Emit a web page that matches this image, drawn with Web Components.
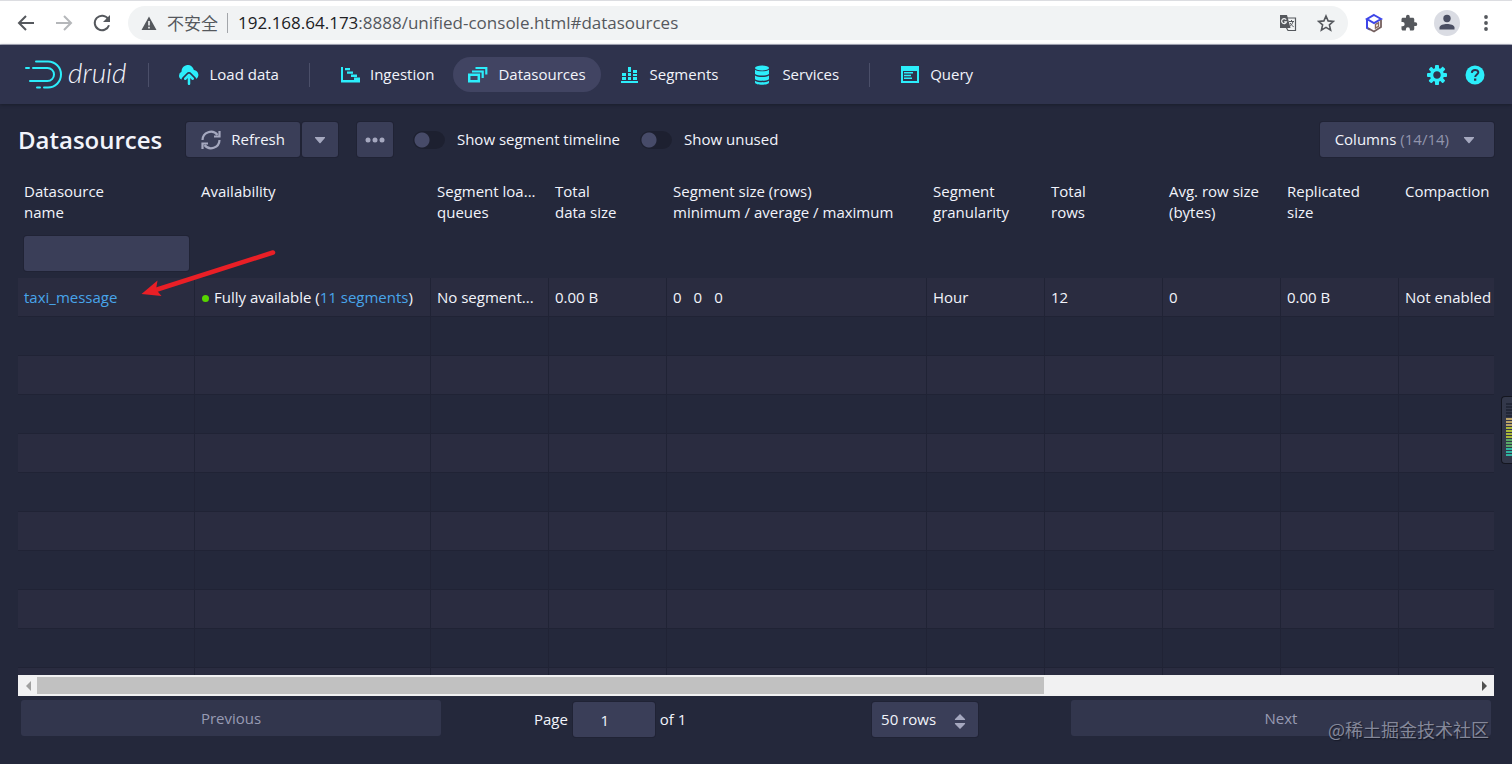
<!DOCTYPE html>
<html lang="en">
<head>
<meta charset="utf-8">
<title>Apache Druid</title>
<style>
    body {
        margin: 0;
        background: #24283b;
        color: #f2f4fb;
        font: 15px/21px "Open Sans", "Noto Sans CJK SC", sans-serif;
        --accent: #2ceefb;
        --control: #3a3e58;
        --muted: #a5a8bf;
        --line: #202335;
    }
</style>
</head>
<body>
<console-page></console-page>

<script>
const ICONS = {
    back: ['0 0 20 20', '<path d="M18 10H3M10 3l-7 7 7 7" fill="none" stroke="currentColor" stroke-width="2"/>'],
    forward: ['0 0 20 20', '<path d="M2 10h15M10 3l7 7-7 7" fill="none" stroke="currentColor" stroke-width="2"/>'],
    reload: ['0 0 20 20', '<path d="M16.2 6A7.3 7.3 0 1 0 17 12.200" fill="none" stroke="currentColor" stroke-width="2"/><path d="M18 2v7h-7z" fill="currentColor"/>'],
    warning: ['0 0 16 16', '<path fill="currentColor" fill-rule="evenodd" d="M8 1.500 15.500 15H.500zM7.200 6v4.500h1.600V6zM7.200 11.700v1.700h1.600v-1.700z"/>'],
    translate: ['0 0 18 18', '<path d="M8 4h8.500v12.500H9L7 13" fill="none" stroke="currentColor" stroke-width="1.200"/><path fill="currentColor" d="M1 1h7l3.500 13H1z"/><path d="M7.200 5.600a2.500 2.500 0 1 0 .3 2.300H5.200" fill="none" stroke="#f1f3f4" stroke-width="1.200"/><path d="M10 7.500h5M12.500 6v1.500M14 7.500c-.5 2.500-2 4-3.500 5M11.300 9c.8 1.800 2 3 3.400 3.700" fill="none" stroke="currentColor"/>'],
    star: ['0 0 18 18', '<path d="m9 2 2.100 4.900 5.300.5-4 3.500 1.200 5.200L9 13.400l-4.600 2.700 1.200-5.200-4-3.500 5.300-.5z" fill="none" stroke="currentColor" stroke-width="1.600"/>'],
    cube: ['0 0 18 20', '<path d="M9 2 16 6 9 10 2 6zM2 6v9l3 1.500" fill="none" stroke="#3d45e8" stroke-width="2"/><path d="M3 15.200 9 18.500 16 14V7" fill="none" stroke="#75605f" stroke-width="1.800"/><path d="M10.500 11.500v3.500l3-1.700V9.800z" fill="none" stroke="#8a6a60" stroke-width="1.400"/>'],
    puzzle: ['0 0 24 24', '<path fill="currentColor" d="M20.500 11H19V7c0-1.100-.9-2-2-2h-4V3.500a2.500 2.500 0 0 0-5 0V5H4c-1.100 0-2 .9-2 2v3.800h1.500a2.700 2.700 0 0 1 0 5.400H2V20c0 1.100.9 2 2 2h3.800v-1.500a2.700 2.700 0 0 1 5.400 0V22H17c1.100 0 2-.9 2-2v-4h1.500a2.500 2.500 0 0 0 0-5z"/>'],
    person: ['0 0 26 26', '<circle cx="13" cy="13" r="13" fill="#dadce3"/><circle cx="13" cy="8.500" r="3.700" fill="#4a4e62"/><path fill="#4a4e62" d="M5.500 19.500v-2c0-2.500 4.500-3.500 7.500-3.500s7.500 1 7.500 3.500v2z"/>'],
    kebab: ['0 0 20 20', '<g fill="currentColor"><circle cx="10" cy="4" r="1.900"/><circle cx="10" cy="10" r="1.900"/><circle cx="10" cy="16" r="1.900"/></g>'],
    upload: ['0 0 16 16', '<path fill="currentColor" d="M8.710 7.290C8.530 7.110 8.280 7 8 7s-.53.110-.71.290l-3 3a1.003 1.003 0 0 0 1.420 1.420L7 10.410V15c0 .550.450 1 1 1s1-.450 1-1v-4.590l1.290 1.290c.180.190.430.300.710.300a1.003 1.003 0 0 0 .710-1.710zM12 4h-.1A5 5 0 0 0 2 5l.02.330A3.500 3.500 0 0 0 0 8.500c0 1.400.84 2.600 2.030 3.170.02-.7.300-1.390.83-1.920l3-3a3 3 0 0 1 4.280 0l3 3c.4.400.66.880.78 1.400A4 4 0 0 0 12 4z"/>'],
    gantt: ['0 0 20 20', '<path fill="currentColor" d="M1 2h2v13h17v2.500H1zM5 3h5v2.300H5zM7 6.500h6v2.300H7zM11 9.500h6V12h-6zM14 12.500h6V15h-6z"/>'],
    multi: ['0 0 20 20', '<g fill="none" stroke="currentColor" stroke-width="2.200"><path d="M1.200 9.700h9.600v6.600H1.200z" stroke-width="2.500"/><path d="M4 6.500h10.700V13M7.500 3h10.800v6.500"/></g>'],
    bars: ['0 0 20 20', '<path fill="currentColor" d="M1 16h17v2H1zM2 12h4v3H2zM2 8h4v3H2zM8 12h3v3H8zM8 8h3v3H8zM8 2h3v5H8zM13 12h4v3h-4zM13 9h4v2h-4zM13 5h4v3h-4z"/>'],
    database: ['0 0 20 20', '<g fill="currentColor"><ellipse cx="10" cy="3" rx="7" ry="2.600"/><path d="M3 4.800c3 2 11 2 14 0V9c-3 2-11 2-14 0zM3 10.500c3 2 11 2 14 0v3.700c-3 2-11 2-14 0zM3 15.700c3 2 11 2 14 0v1.800c0 3-14 3-14 0z"/></g>'],
    application: ['0 0 20 20', '<path fill="currentColor" fill-rule="evenodd" d="M1 1h18v17H1zM3 6v10h14V6zM4 7h9v1.500H4zM4 9.800h7v1.500H4zM4 12.500h8V14H4z"/>'],
    cog: ['0 0 16 16', '<path fill="currentColor" d="M15.190 6.390h-1.850c-.11-.37-.27-.71-.45-1.040l1.360-1.360c.31-.31.31-.82 0-1.130l-1.130-1.130c-.31-.31-.82-.31-1.130 0l-1.360 1.360c-.33-.17-.67-.33-1.040-.44V.790c0-.44-.36-.8-.8-.8h-1.600c-.44 0-.8.360-.8.800v1.860c-.39.120-.75.280-1.100.470l-1.300-1.300c-.3-.3-.79-.3-1.090 0L1.820 2.910c-.3.300-.3.790 0 1.090l1.300 1.300c-.2.340-.36.700-.48 1.090H.790c-.44 0-.8.360-.8.800v1.600c0 .440.360.800.800.800h1.850c.110.370.270.710.450 1.040l-1.360 1.360c-.31.310-.31.820 0 1.130l1.130 1.130c.310.310.820.310 1.130 0l1.360-1.360c.330.180.670.330 1.040.440v1.860c0 .440.360.800.800.800h1.600c.440 0 .8-.36.8-.8v-1.860c.390-.12.750-.28 1.100-.47l1.300 1.300c.3.300.790.300 1.090 0l1.090-1.090c.3-.3.300-.79 0-1.090l-1.300-1.300c.190-.35.360-.71.480-1.100h1.850c.440 0 .8-.36.8-.8v-1.600a.816.816 0 0 0-.81-.79zm-7.200 4.600c-1.660 0-3-1.340-3-3s1.340-3 3-3 3 1.340 3 3-1.340 3-3 3z"/>'],
    help: ['0 0 20 20', '<circle cx="10" cy="10" r="9.500" fill="currentColor"/><path d="M6.800 7.800C7 5.800 8.300 5 10.100 5c3.400 0 4 2.600 2.300 4.100C11 10.300 10.300 10.500 10.200 12" fill="none" stroke="#2f334d" stroke-width="2"/><path d="M9 13.500h2.300v2.200H9z" fill="#2f334d"/>'],
    refresh: ['0 0 20 20', '<g fill="none" stroke="currentColor" stroke-width="2.200"><path d="M1.500 10A8.400 8.400 0 0 1 16.500 5M18.500 10A8.400 8.400 0 0 1 3.500 15"/><path d="M18.500 1v5.500H13M1.500 19v-5.500H7"/></g>'],
    caret: ['0 0 20 20', '<path fill="currentColor" d="M5.500 7h9c.6 0 .7.500.4.900l-4.300 5c-.3.400-.9.400-1.200 0l-4.300-5c-.3-.4-.2-.9.400-.9z"/>'],
    more: ['0 0 20 20', '<g fill="currentColor"><circle cx="3" cy="10" r="2.500"/><circle cx="10" cy="10" r="2.500"/><circle cx="17" cy="10" r="2.500"/></g>'],
    updown: ['0 0 20 20', '<path fill="currentColor" d="m10 3 5 5c.3.500.1 1-.5 1h-9c-.6 0-.8-.5-.5-1zM10 18l-5-5c-.3-.5-.1-1 .5-1h9c.6 0 .8.500.5 1z"/>'],
    left: ['0 0 10 10', '<path fill="currentColor" d="M8 0v10L3 5z"/>'],
    right: ['0 0 10 10', '<path fill="currentColor" d="M2 0v10l5-5z"/>']
};

/**
 * Base of all elements on the page: renders the static template of the class
 * into an open shadow root.
 */
class ConsoleElement extends HTMLElement {
    connectedCallback() {
        if (this.shadowRoot) return;
        const tmp = document.createElement('template');
        tmp.innerHTML = this.constructor.template;
        this.attachShadow({mode: 'open'}).append(tmp.content.cloneNode(true));
        this.init();
    }

    init() {}
}

// <console-icon name="cog" size="20">
class ConsoleIcon extends ConsoleElement {
    static template = `
        <style>
            :host { display: inline-flex; flex: none; }
            svg { display: block; }
        </style>`;

    init() {
        const [viewBox, shapes] = ICONS[this.getAttribute('name')];
        const size = this.getAttribute('size') || 20;
        this.shadowRoot.innerHTML += `<svg width="${size}" height="${size}" viewBox="${viewBox}" aria-hidden="true">${shapes}</svg>`;
    }
}

class BrowserBar extends ConsoleElement {
    static template = `
        <style>
            :host {
                display: flex;
                align-items: center;
                box-sizing: border-box;
                height: 45px;
                padding: 0 16px;
                background: #fff;
                border-top: 1px solid #dcdde1;
                border-bottom: 1px solid #b9bbc9;
                color: #55585d;
            }
            button {
                display: flex;
                padding: 0;
                border: 0;
                background: none;
                color: inherit;
            }
            nav { display: flex; gap: 18px; margin-right: 16px; }
            button:disabled { color: #b5b7ba; }
            .address {
                display: flex;
                align-items: center;
                flex: 1;
                height: 34px;
                padding: 0 13px;
                border-radius: 17px;
                background: #f1f3f4;
                font-size: 17px;
            }
            .insecure {
                margin: 0 10px;
                padding-right: 9px;
                border-right: 1px solid #a3a6aa;
                font: 17px/20px "Noto Sans CJK SC", sans-serif;
            }
            .url { flex: 1; white-space: nowrap; }
            b { font-weight: 400; color: #202124; }
            .address button { margin-left: 20px; }
            .tools { display: flex; align-items: center; gap: 16px; margin-left: 16px; }
        </style>
        <nav>
            <button aria-label="Back"><console-icon name="back"></console-icon></button>
            <button aria-label="Forward" disabled><console-icon name="forward"></console-icon></button>
            <button aria-label="Reload"><console-icon name="reload"></console-icon></button>
        </nav>
        <div class="address">
            <console-icon name="warning" size="16"></console-icon>
            <span class="insecure" lang="zh">不安全</span>
            <span class="url"><b>192.168.64.173</b>:8888/unified-console.html#datasources</span>
            <button aria-label="Translate"><console-icon name="translate" size="18"></console-icon></button>
            <button aria-label="Bookmark"><console-icon name="star" size="18"></console-icon></button>
        </div>
        <div class="tools">
            <button aria-label="Extension"><console-icon name="cube"></console-icon></button>
            <button aria-label="Extensions"><console-icon name="puzzle" size="18"></console-icon></button>
            <button aria-label="Profile"><console-icon name="person" size="26"></console-icon></button>
            <button aria-label="Menu"><console-icon name="kebab"></console-icon></button>
        </div>`;
}

class DruidLogo extends ConsoleElement {
    static template = `
        <style>
            :host { display: flex; align-items: center; }
            a {
                display: flex;
                align-items: center;
                gap: 5px;
                color: inherit;
                text-decoration: none;
                font: italic 300 28px/30px Lato, sans-serif;
            }
            svg { display: block; }
            span { padding-bottom: 6px; }
        </style>
        <a href="#">
            <svg width="39" height="30" viewBox="0 0 39 30" fill="none" stroke="#2ceefb" stroke-width="2" stroke-linecap="round" aria-hidden="true">
                <path d="M12 1.500h12a13 13 0 0 1 0 26H20M13 27.500h3"/>
                <path d="M9 8h14.500a6.500 6.500 0 0 1 0 13H6M2 8h3"/>
            </svg>
            <span>druid</span>
        </a>`;
}

// <nav-item icon="cog" active>Label</nav-item>
class NavItem extends ConsoleElement {
    static template = `
        <style>
            :host { display: block; }
            a {
                display: flex;
                align-items: center;
                gap: 10px;
                height: 35px;
                padding: 0 15px;
                border-radius: 18px;
                color: inherit;
                text-decoration: none;
                white-space: nowrap;
            }
            :host([active]) a { background: #414462; }
            console-icon { color: var(--accent); }
        </style>
        <a href="#"><slot></slot></a>`;

    init() {
        const icon = document.createElement('console-icon');
        icon.setAttribute('name', this.getAttribute('icon'));
        this.shadowRoot.querySelector('a').prepend(icon);
    }
}

class HeaderBar extends ConsoleElement {
    static template = `
        <style>
            :host {
                display: flex;
                align-items: center;
                gap: 4px;
                height: 59px;
                padding: 0 27px 0 24px;
                background: #2f334d;
                box-shadow: 0 1px 3px #1a1d2c;
                z-index: 1;
            }
            hr {
                width: 1px;
                height: 24px;
                margin: 0 11px;
                border: 0;
                background: #4b4f69;
            }
            druid-logo { margin-right: 7px; }
            .tools { display: flex; gap: 18px; margin-left: auto; }
            .tools button {
                display: flex;
                padding: 0;
                border: 0;
                background: none;
                color: var(--accent);
            }
        </style>
        <druid-logo></druid-logo>
        <hr>
        <nav-item icon="upload">Load data</nav-item>
        <hr>
        <nav-item icon="gantt">Ingestion</nav-item>
        <nav-item icon="multi" active>Datasources</nav-item>
        <nav-item icon="bars">Segments</nav-item>
        <nav-item icon="database">Services</nav-item>
        <hr>
        <nav-item icon="application">Query</nav-item>
        <div class="tools">
            <button aria-label="Settings"><console-icon name="cog"></console-icon></button>
            <button aria-label="Help"><console-icon name="help"></console-icon></button>
        </div>`;
}

class ToolButton extends ConsoleElement {
    static template = `
        <style>
            :host { display: block; }
            button {
                display: flex;
                align-items: center;
                justify-content: center;
                gap: 10px;
                width: 100%;
                height: 35px;
                padding: 0 var(--pad, 15px);
                border: 0;
                border-radius: 3px;
                background: var(--control);
                box-shadow: 0 0 0 1px #202335;
                color: inherit;
                font: inherit;
                white-space: nowrap;
            }
            button:disabled { background: #32364d; box-shadow: none; color: #989bb3; height: 36px; }
            ::slotted(console-icon) { color: var(--muted); }
        </style>
        <button><slot></slot></button>`;

    init() {
        const button = this.shadowRoot.querySelector('button');
        button.disabled = this.hasAttribute('disabled');
        if (this.hasAttribute('label')) button.setAttribute('aria-label', this.getAttribute('label'));
    }
}

class ToggleSwitch extends ConsoleElement {
    static template = `
        <style>
            :host { display: block; }
            label { display: flex; align-items: center; gap: 12px; white-space: nowrap; }
            input {
                appearance: none;
                width: 32px;
                height: 18px;
                margin: 0;
                border-radius: 9px;
                background: radial-gradient(circle at 9px 9px, #474b69 7px, #1d2030 8px);
            }
            input:checked { background: radial-gradient(circle at 23px 9px, #fff 7px, #1aa6b3 8px); }
        </style>
        <label><input type="checkbox"><slot></slot></label>`;
}

class ControlBar extends ConsoleElement {
    static template = `
        <style>
            :host { display: flex; align-items: center; gap: 20px; height: 35px; }
            h1 { margin: 0 4px 0 0; font-size: 24px; line-height: 35px; font-weight: 600; }
            .group { display: flex; gap: 2px; margin-right: -1px; }
            .icon { --pad: 8px; }
            .columns { margin-left: auto; }
            .count { margin-left: -6px; color: #9295ad; }
        </style>
        <h1>Datasources</h1>
        <div class="group">
            <tool-button><console-icon name="refresh"></console-icon><span>Refresh</span></tool-button>
            <tool-button class="icon" label="More refresh options"><console-icon name="caret"></console-icon></tool-button>
        </div>
        <tool-button class="icon" label="More actions"><console-icon name="more"></console-icon></tool-button>
        <toggle-switch>Show segment timeline</toggle-switch>
        <toggle-switch>Show unused</toggle-switch>
        <tool-button class="columns"><span>Columns</span><span class="count">(14/14)</span><console-icon name="caret"></console-icon></tool-button>`;
}

const COLUMNS = [
    {width: 177, head: ['Datasource', 'name'], cell: '<a href="#">taxi_message</a>', filter: true},
    {width: 236, head: ['Availability'], cell: '<i></i>Fully available (<a href="#">11 segments</a>)'},
    {width: 118, head: ['Segment loa...', 'queues'], cell: 'No segment...'},
    {width: 118, head: ['Total', 'data size'], cell: '0.00 B'},
    {width: 260, head: ['Segment size (rows)', 'minimum / average / maximum'], cell: '<span>0</span><span>0</span><span>0</span>'},
    {width: 118, head: ['Segment', 'granularity'], cell: 'Hour'},
    {width: 118, head: ['Total', 'rows'], cell: '12'},
    {width: 118, head: ['Avg. row size', '(bytes)'], cell: '0'},
    {width: 118, head: ['Replicated', 'size'], cell: '0.00 B'},
    {width: 118, head: ['Compaction'], cell: 'Not enabled'}
];

const PAD_ROWS = 10;

class DatasourceTable extends ConsoleElement {
    static template = `
        <style>
            :host { display: block; overflow: hidden; }
            table {
                width: 100%;
                min-width: 1499px;
                table-layout: fixed;
                border-collapse: separate;
                border-spacing: 0;
            }
            th, td {
                box-sizing: border-box;
                padding: 0 6px;
                overflow: hidden;
                text-overflow: ellipsis;
                text-align: left;
                font-weight: 400;
                white-space: nowrap;
            }
            .head th { height: 56px; padding-top: 5px; vertical-align: top; }
            .filters th { height: 46px; padding-top: 4px; vertical-align: top; }
            td { height: 39px; border-right: 1px solid var(--line); border-bottom: 1px solid var(--line); }
            tr:nth-child(odd) td { background: #2a2c40; }
            input {
                box-sizing: border-box;
                display: block;
                width: 100%;
                height: 35px;
                padding: 0 10px;
                border: 0;
                border-radius: 3px;
                background: var(--control);
                box-shadow: 0 0 0 1px #202335;
                color: inherit;
                font: inherit;
            }
            a { color: #48a5ea; text-decoration: none; }
            i {
                display: inline-block;
                width: 7px;
                height: 7px;
                margin: 0 5px 1px 1px;
                border-radius: 50%;
                background: #57d500;
            }
            span { margin-right: 12px; }
        </style>
        <table>
            <colgroup></colgroup>
            <thead><tr class="head"></tr><tr class="filters"></tr></thead>
            <tbody></tbody>
        </table>`;

    init() {
        const find = (selector) => this.shadowRoot.querySelector(selector);
        find('colgroup').innerHTML = COLUMNS.map(c => `<col style="width: ${c.width}px">`).join('');
        find('.head').innerHTML = COLUMNS.map(c => `<th scope="col">${c.head.map(line => `<div>${line}</div>`).join('')}</th>`).join('');
        find('.filters').innerHTML = COLUMNS.map(c => `<th>${c.filter ? '<input type="text" aria-label="Filter datasource name">' : ''}</th>`).join('');
        const row = `<tr>${COLUMNS.map(c => `<td>${c.cell}</td>`).join('')}</tr>`;
        const padRow = `<tr>${'<td></td>'.repeat(COLUMNS.length)}</tr>`;
        find('tbody').innerHTML = row + padRow.repeat(PAD_ROWS);
    }
}

class ScrollTrack extends ConsoleElement {
    static template = `
        <style>
            :host { display: flex; height: 21px; background: #f1f1f2; }
            button {
                display: flex;
                align-items: center;
                justify-content: center;
                width: 19px;
                padding: 0;
                border: 0;
                background: none;
                color: #505050;
            }
            button:disabled { color: #a0a0a0; }
            .track { flex: 1; padding: 2px 0; }
            .thumb { width: 70%; height: 17px; background: #c1c1c1; }
        </style>
        <button aria-label="Scroll left" disabled><console-icon name="left" size="10"></console-icon></button>
        <div class="track"><div class="thumb"></div></div>
        <button aria-label="Scroll right"><console-icon name="right" size="10"></console-icon></button>`;
}

class TablePager extends ConsoleElement {
    static template = `
        <style>
            :host { display: flex; padding: 4px 3px 0; }
            tool-button { flex: 1; }
            .center { display: flex; flex: 1.5; align-items: center; justify-content: space-around; padding-top: 2px; }
            .page { display: flex; align-items: center; gap: 5px; }
            label { display: flex; align-items: center; gap: 5px; }
            input, select {
                box-sizing: border-box;
                height: 35px;
                border: 0;
                border-radius: 3px;
                background: var(--control);
                box-shadow: 0 0 0 1px #202335;
                color: inherit;
                font: inherit;
            }
            input { width: 82px; padding: 0 24px 0 6px; text-align: center; }
            .size { display: grid; align-items: center; }
            select { grid-area: 1 / 1; width: 106px; padding: 0 9px; appearance: none; }
            .size console-icon {
                grid-area: 1 / 1;
                justify-self: end;
                margin: 3px 8px 0 0;
                color: var(--muted);
                pointer-events: none;
            }
        </style>
        <tool-button disabled>Previous</tool-button>
        <div class="center">
            <div class="page">
                <label>Page <input type="text" inputmode="numeric" value="1"></label>
                <span>of 1</span>
            </div>
            <div class="size">
                <select aria-label="Rows per page"><option>50 rows</option><option>100 rows</option></select>
                <console-icon name="updown"></console-icon>
            </div>
        </div>
        <tool-button disabled>Next</tool-button>`;
}

class LevelMeter extends ConsoleElement {
    static template = `
        <style>
            :host {
                display: block;
                box-sizing: border-box;
                width: 11px;
                height: 68px;
                padding: 6px 1px 6px 4px;
                border: 1px solid #14161f;
                border-right: 0;
                border-radius: 4px 0 0 4px;
                background: #33384a;
            }
            svg { display: block; }
        </style>
        <svg width="6" height="54" viewBox="0 0 6 54" stroke-width="6" stroke-dasharray="2 1" aria-hidden="true">
            <path d="M3 0v15" stroke="#222736"/>
            <path d="M3 15v9" stroke="#b9a266"/>
            <path d="M3 24v12" stroke="#a9b838"/>
            <path d="M3 36v9" stroke="#58a866"/>
            <path d="M3 45v9" stroke="#2fb3a0"/>
        </svg>`;
}

class ConsolePage extends ConsoleElement {
    static template = `
        <style>
            :host {
                position: relative;
                display: flex;
                flex-direction: column;
                height: 100vh;
                overflow: hidden;
            }
            browser-bar, header-bar { flex: none; }
            main {
                display: flex;
                flex: 1;
                flex-direction: column;
                min-height: 0;
                padding: 18px 18px 27px;
            }
            control-bar { flex: none; margin-bottom: 19px; }
            datasource-table { flex: 1; min-height: 0; }
            .arrow { position: absolute; left: 140px; top: 246px; }
            level-meter { position: absolute; right: 0; top: 396px; }
            .watermark {
                position: absolute;
                right: 23px;
                bottom: 22px;
                color: #85889a;
                font: 18px/26px "Noto Sans CJK SC", sans-serif;
                text-shadow: 1px 1px 1px #171a28;
            }
        </style>
        <browser-bar></browser-bar>
        <header-bar></header-bar>
        <main>
            <control-bar></control-bar>
            <datasource-table></datasource-table>
            <scroll-track></scroll-track>
            <table-pager></table-pager>
        </main>
        <svg class="arrow" width="138" height="54" viewBox="0 0 138 54" aria-hidden="true">
            <path d="M133 6.500 14 44.500" stroke="#e91f26" stroke-width="4.500" stroke-linecap="round"/>
            <path d="M1.500 48 17.500 34.500 16 43.500 21.500 50z" fill="#e91f26"/>
        </svg>
        <level-meter></level-meter>
        <span class="watermark" lang="zh">@稀土掘金技术社区</span>`;
}

customElements.define('console-icon', ConsoleIcon);
customElements.define('browser-bar', BrowserBar);
customElements.define('druid-logo', DruidLogo);
customElements.define('nav-item', NavItem);
customElements.define('header-bar', HeaderBar);
customElements.define('tool-button', ToolButton);
customElements.define('toggle-switch', ToggleSwitch);
customElements.define('control-bar', ControlBar);
customElements.define('datasource-table', DatasourceTable);
customElements.define('scroll-track', ScrollTrack);
customElements.define('table-pager', TablePager);
customElements.define('level-meter', LevelMeter);
customElements.define('console-page', ConsolePage);
</script>
</body>
</html>
